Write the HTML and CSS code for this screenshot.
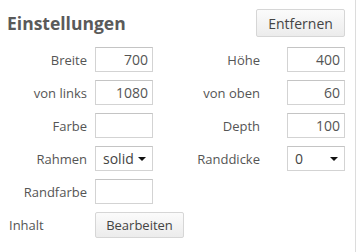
FILE: index.html
```html
<!DOCTYPE html>
<html lang="de">
<head>
  <meta charset="UTF-8">
  <meta name="viewport" content="width=device-width, initial-scale=1">
  <title>Einstellungen</title>
  <link rel="stylesheet" href="styles.css">
</head>
<body>

  <div class="panel">
    <!-- Kopfzeile -->
    <div class="head">
      <h2>Einstellungen</h2>
      <button class="btn btn-remove">Entfernen</button>
    </div>

    <!-- Eigenschaften -->
    <div class="props">
      <label class="lbl">Breite</label>
      <input class="field" type="text" value="700">
      <label class="lbl">Höhe</label>
      <input class="field" type="text" value="400">

      <label class="lbl">von links</label>
      <input class="field" type="text" value="1080">
      <label class="lbl">von oben</label>
      <input class="field" type="text" value="60">

      <label class="lbl">Farbe</label>
      <input class="field" type="text" value="">
      <label class="lbl">Depth</label>
      <input class="field" type="text" value="100">

      <label class="lbl">Rahmen</label>
      <div class="sel">
        <select>
          <option>solid</option>
          <option>dashed</option>
          <option>dotted</option>
        </select>
      </div>
      <label class="lbl">Randdicke</label>
      <div class="sel">
        <select>
          <option>0</option>
          <option>1</option>
          <option>2</option>
        </select>
      </div>

      <label class="lbl">Randfarbe</label>
      <input class="field" type="text" value="">
      <span></span>
      <span></span>

      <label class="lbl lbl-left">Inhalt</label>
      <button class="btn btn-edit">Bearbeiten</button>
    </div>
  </div>

</body>
</html>
```

FILE: styles.css
```css
/* Allgemein */
body {
  margin: 0;
  font-family: 'Open Sans', 'DejaVu Sans', sans-serif;
  background: #fff;
  color: #555;
}
.panel {
  width: 355px;
  height: 252px;
  border-right: 1px solid #dcdcdc;
}
/* Kopfzeile */
.head {
  display: flex;
  justify-content: space-between;
  align-items: center;
  padding: 9px 10px 0 7px;
}
.head h2 {
  margin: 0;
  font-size: 17.5px;
  font-weight: bold;
  color: #5a5a5a;
}
.btn {
  font-family: inherit;
  font-size: 13px;
  color: #444;
  background: linear-gradient(#fbfbfb, #ececec);
  border: 1px solid #d6d6d6;
  border-radius: 2px;
  padding: 0;
  cursor: pointer;
}
.btn-remove {
  width: 89px;
  height: 28px;
  font-size: 14px;
}
.btn-edit {
  grid-column: 2 / span 2;
  justify-self: start;
  margin-left: 8px;
  width: 89px;
  height: 26px;
}
/* Eigenschaften */
.props {
  display: grid;
  grid-template-columns: 87px 66px 107px 85px;
  grid-auto-rows: 25px;
  row-gap: 8px;
  margin-top: 10px;
  align-items: center;
}
.lbl {
  text-align: right;
  font-size: 13px;
  color: #555;
}
.lbl-left {
  text-align: left;
  padding-left: 9px;
  align-self: center;
  margin-top: 1px;
}
.field {
  justify-self: end;
  box-sizing: border-box;
  width: 58px;
  height: 25px;
  margin: 0;
  padding: 0 4px;
  border: 1px solid #d3d3d3;
  border-top-color: #c4c4c4;
  border-radius: 0;
  text-align: right;
  font-family: inherit;
  font-size: 14px;
  color: #555;
  outline: none;
}
.sel {
  justify-self: end;
  position: relative;
  width: 58px;
  height: 25px;
}
.sel select {
  -webkit-appearance: none;
  appearance: none;
  box-sizing: border-box;
  width: 58px;
  height: 25px;
  margin: 0;
  padding: 0 0 0 7px;
  border: 1px solid #d3d3d3;
  border-top-color: #c4c4c4;
  border-radius: 0;
  background: #fff;
  font-family: inherit;
  font-size: 14px;
  color: #444;
  outline: none;
}
.sel::after {
  content: "";
  position: absolute;
  right: 7px;
  top: 11px;
  border-left: 4px solid transparent;
  border-right: 4px solid transparent;
  border-top: 4px solid #111;
  pointer-events: none;
}
```
